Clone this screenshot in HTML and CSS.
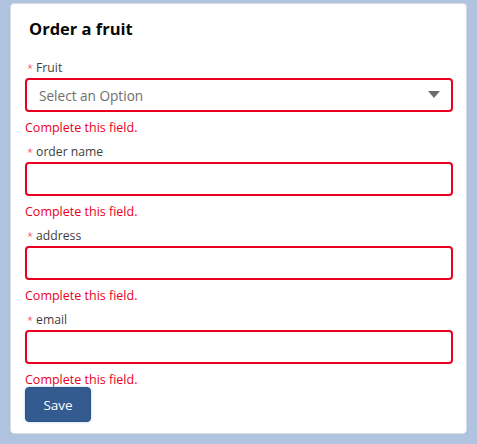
FILE: index.html
```html
<!DOCTYPE html>
<html>

<head>
  <meta charset="utf-8" />
  <meta name="viewport" content="width=device-width, initial-scale=1" />
  <title>Order a fruit</title>
  <link rel="stylesheet" href="styles.css">
</head>

<body>
  <div class="card">
    <h2 class="card-title">Order a fruit</h2>
    <form class="card-body">
      <div class="field">
        <label class="field-label"><abbr class="req">*</abbr>Fruit</label>
        <div class="select">
          <span class="placeholder">Select an Option</span>
          <svg class="caret" width="12" height="8" viewBox="0 0 12 8"><path d="M0 0h12L6 7z" fill="#706e6b"/></svg>
        </div>
        <div class="field-error">Complete this field.</div>
      </div>
      <div class="field">
        <label class="field-label"><abbr class="req">*</abbr>order name</label>
        <input class="input" type="text">
        <div class="field-error">Complete this field.</div>
      </div>
      <div class="field">
        <label class="field-label"><abbr class="req">*</abbr>address</label>
        <input class="input" type="text">
        <div class="field-error">Complete this field.</div>
      </div>
      <div class="field">
        <label class="field-label"><abbr class="req">*</abbr>email</label>
        <input class="input" type="text">
        <div class="field-error">Complete this field.</div>
      </div>
      <button class="button-brand" type="button">Save</button>
    </form>
  </div>
</body>

</html>
```

FILE: styles.css
```css
html,
body {
  background-color: #b0c4df;
  color: #3e3e3c;
}

body {
  margin: 0;
  padding: 3px 10px 0;
  font-family: "Open Sans", Arial, sans-serif;
}

.card {
  width: 455px;
  height: 429px;
  background: #fff;
  border: 1px solid #d8dde6;
  border-radius: 4px;
  box-shadow: 0 2px 2px rgba(0, 0, 0, .1);
}

.card-title {
  margin: 15px 0 0 18px;
  font-size: 16.5px;
  line-height: 20px;
  font-weight: 700;
  color: #080707;
}

.card-body {
  margin: 0;
  padding: 19px 13px 0 14px;
}

.field {
  display: flex;
  flex-direction: column;
  margin-bottom: 6px;
}

.field-label {
  display: flex;
  align-items: center;
  height: 18px;
  margin-bottom: 2px;
  font-size: 12.2px;
  color: #3e3e3c;
}

.req {
  color: #ea001e;
  text-decoration: none;
  margin: 0 3px 0 2px;
  font-size: 11px;
  font-weight: 300;
}

.select,
.input {
  box-sizing: border-box;
  height: 34px;
  width: 100%;
  border: 2px solid #ea001e;
  border-radius: 4px;
  background: #fff;
}

.select {
  display: flex;
  align-items: center;
  justify-content: space-between;
  padding: 0 11px 0 12px;
}

.placeholder {
  font-size: 13.6px;
  color: #706e6b;
}

.input {
  margin: 0;
  font: inherit;
  outline: none;
}

.field-error {
  margin-top: 6px;
  height: 18px;
  line-height: 19px;
  font-size: 12.5px;
  color: #ea001e;
}

.field:last-of-type {
  margin-bottom: 0;
}

.field:last-of-type .field-error {
  height: 17px;
}

.button-brand {
  width: 66px;
  height: 35px;
  border: 1px solid #2c5387;
  border-radius: 4px;
  background: #335b90;
  color: #fff;
  font-family: inherit;
  font-size: 13.5px;
  box-shadow: 0 0 3px #b3d4f5;
}
```
